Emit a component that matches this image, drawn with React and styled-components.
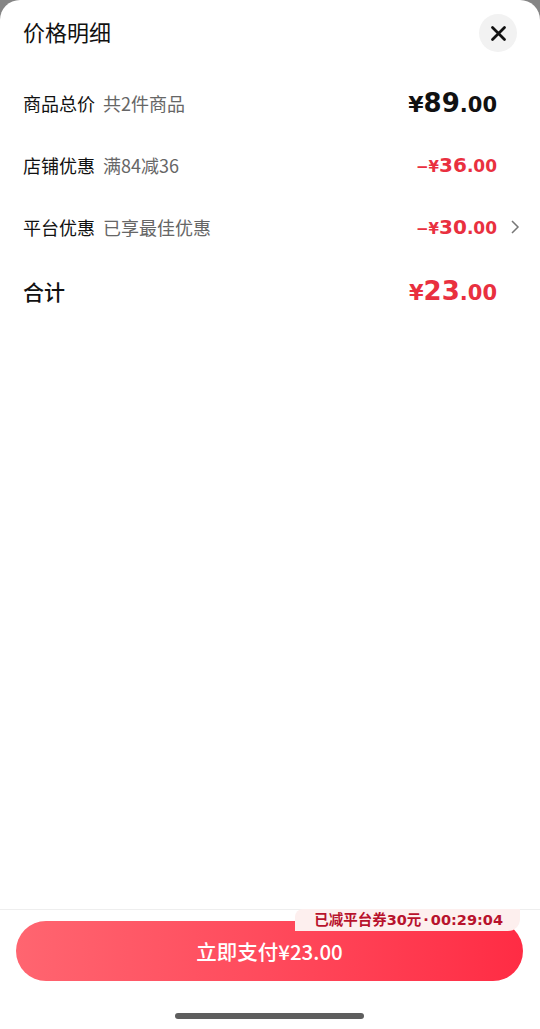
import React from 'react';
import styled, { createGlobalStyle } from 'styled-components';

const GlobalStyle = createGlobalStyle`
  html, body {
    margin: 0;
    padding: 0;
    background: #858585;
  }
  body {
    font-family: "Noto Sans CJK SC", "Noto Sans", sans-serif;
    -webkit-font-smoothing: antialiased;
  }
`

const Sheet = styled.div`
  height: 1029px;
  background: #fff;
  border-radius: 20px 20px 0 0;
  display: flex;
  flex-direction: column;
  overflow: hidden;
`

const Header = styled.div`
  height: 66px;
  padding: 0 23px;
  display: flex;
  align-items: center;
  justify-content: space-between;
`

const Title = styled.div`
  font-size: 22px;
  line-height: 22px;
  color: #111;
  font-weight: 400;
  margin-bottom: 4px;
`

const CloseButton = styled.button`
  width: 38px;
  height: 38px;
  border-radius: 50%;
  border: none;
  background: #f2f2f2;
  padding: 0;
  display: flex;
  align-items: center;
  justify-content: center;
`

const Content = styled.div`
  flex: 1;
  padding: 6px 20px 0 23px;
`

const Row = styled.div`
  height: ${p => p.$height || 62}px;
  display: grid;
  grid-template-columns: 1fr auto 23px;
  align-items: center;
`

const Label = styled.div`
  font-size: ${p => p.$big ? 21 : 18}px;
  font-weight: ${p => p.$big ? 500 : 400};
  color: #111;
  display: flex;
  align-items: baseline;
  gap: 8px;
`

const Hint = styled.span`
  color: #666;
  font-size: 18px;
`

const Price = styled.div`
  font-family: "DejaVu Sans", "Noto Sans CJK SC", sans-serif;
  font-weight: 700;
  color: ${p => p.$red ? '#e9303f' : '#111'};
  display: flex;
  align-items: baseline;
  font-size: ${p => p.$size}px;
`

const Small = styled.span`
  font-size: ${p => p.$size}px;
`

const Chevron = styled.div`
  display: flex;
  justify-content: flex-end;
  align-items: center;
  color: #777;
`

const Footer = styled.div`
  border-top: 1px solid #eeeeee;
  padding: 11px 17px 10px 16px;
  display: flex;
  flex-direction: column;
  align-items: center;
`

const PayWrap = styled.div`
  position: relative;
  width: 100%;
`

const PayButton = styled.button`
  width: 100%;
  height: 60px;
  border: none;
  border-radius: 30px;
  background: linear-gradient(90deg, #ff6570 0%, #ff4a5c 50%, #ff2c44 100%);
  color: #fff;
  font-family: "Noto Sans CJK SC", sans-serif;
  font-size: 20.5px;
  font-weight: 500;
  display: flex;
  align-items: center;
  justify-content: center;
  padding: 0;
`

const Badge = styled.div`
  position: absolute;
  top: -12px;
  right: 3px;
  height: 22px;
  line-height: 22px;
  padding: 0 17px 0 19px;
  background: #fdefee;
  color: #b8122c;
  border-radius: 8px 0 12px 0;
  font-family: "DejaVu Sans", "Noto Sans CJK SC", sans-serif;
  font-size: 14.5px;
  font-weight: 700;
  white-space: nowrap;
`

const Dot = styled.span`
  margin: 0 2px;
`

const HomeBar = styled.div`
  width: 189px;
  height: 6px;
  border-radius: 3px;
  background: #5e5e5e;
  margin-top: 32px;
`

export default function App() {
  return (
    <>
      <GlobalStyle />
      <Sheet>
        <Header>
          <Title>价格明细</Title>
          <CloseButton>
            <svg width="17" height="17" viewBox="0 0 17 17">
              <path d="M2.5 2.5 L14.5 14.5 M14.5 2.5 L2.5 14.5" stroke="#111" strokeWidth="2.8" strokeLinecap="round" />
            </svg>
          </CloseButton>
        </Header>
        <Content>
          <Row>
            <Label>商品总价<Hint>共2件商品</Hint></Label>
            <Price $size={26}><Small $size={22}>¥</Small>89<Small $size={21}>.00</Small></Price>
            <div />
          </Row>
          <Row>
            <Label>店铺优惠<Hint>满84减36</Hint></Label>
            <Price $red $size={20}><Small $size={15}>−¥</Small>36<Small $size={17}>.00</Small></Price>
            <div />
          </Row>
          <Row>
            <Label>平台优惠<Hint>已享最佳优惠</Hint></Label>
            <Price $red $size={20}><Small $size={15}>−¥</Small>30<Small $size={17}>.00</Small></Price>
            <Chevron>
              <svg width="10" height="16" viewBox="0 0 10 16">
                <path d="M2 2 L8 8 L2 14" fill="none" stroke="#777" strokeWidth="1.5" />
              </svg>
            </Chevron>
          </Row>
          <Row $height={66}>
            <Label $big>合计</Label>
            <Price $red $size={26}><Small $size={21}>¥</Small>23<Small $size={21}>.00</Small></Price>
            <div />
          </Row>
        </Content>
        <Footer>
          <PayWrap>
            <PayButton>立即支付¥23.00</PayButton>
            <Badge>已减平台券30元<Dot>·</Dot>00:29:04</Badge>
          </PayWrap>
          <HomeBar />
        </Footer>
      </Sheet>
    </>
  );
}
